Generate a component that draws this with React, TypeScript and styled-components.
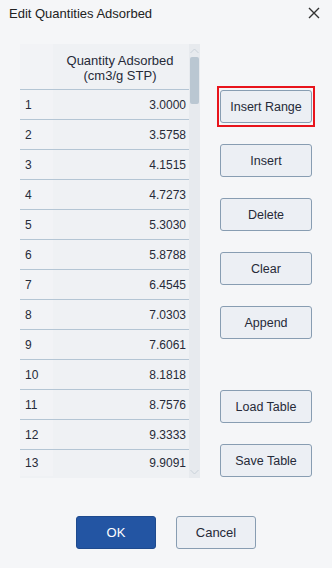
import React from 'react';
import styled, {createGlobalStyle} from 'styled-components';

const values = [
  '3.0000', '3.5758', '4.1515', '4.7273', '5.3030', '5.8788', '6.4545',
  '7.0303', '7.6061', '8.1818', '8.7576', '9.3333', '9.9091',
];

const sideButtons = [
  {label: 'Insert Range', focused: true},
  {label: 'Insert'},
  {label: 'Delete'},
  {label: 'Clear'},
  {label: 'Append', gapAfter: true},
  {label: 'Load Table'},
  {label: 'Save Table'},
];

export default function App() {
  return (
    <>
      <GlobalStyle />
      <Dialog>
        <TitleBar>
          <Title>Edit Quantities Adsorbed</Title>
          <CloseButton aria-label="Close">
            <svg width="12" height="12" viewBox="0 0 12 12">
              <path d="M1 1 L11 11 M11 1 L1 11" stroke="#333" strokeWidth="1.4" />
            </svg>
          </CloseButton>
        </TitleBar>
        <Body>
          <TablePanel>
            <TableArea>
              <HeaderRow>
                <IndexCell />
                <HeaderCell>
                  Quantity Adsorbed
                  <br />
                  (cm3/g STP)
                </HeaderCell>
              </HeaderRow>
              {values.map((v, i) => (
                <Row key={v}>
                  <IndexCell>{i + 1}</IndexCell>
                  <ValueCell>{v}</ValueCell>
                </Row>
              ))}
            </TableArea>
            <ScrollTrack>
              <Arrow>
                <svg width="9" height="6" viewBox="0 0 9 6">
                  <path d="M0.5 5 L4.5 1 L8.5 5" stroke="#c9d1d9" fill="none" />
                </svg>
              </Arrow>
              <Thumb />
              <Spacer />
              <Arrow>
                <svg width="9" height="6" viewBox="0 0 9 6">
                  <path d="M0.5 1 L4.5 5 L8.5 1" stroke="#c9d1d9" fill="none" />
                </svg>
              </Arrow>
            </ScrollTrack>
          </TablePanel>
          <SideColumn>
            {sideButtons.map(b => (
              <SideButton key={b.label} $focused={b.focused} $gapAfter={b.gapAfter}>
                {b.label}
              </SideButton>
            ))}
          </SideColumn>
        </Body>
        <Footer>
          <FooterButton $primary>OK</FooterButton>
          <FooterButton>Cancel</FooterButton>
        </Footer>
      </Dialog>
    </>
  );
}

const GlobalStyle = createGlobalStyle`
  body {
    margin: 0;
    background: #f5f6f8;
    font-family: "Liberation Sans", Arial, sans-serif;
    color: #262a38;
  }
`;

const Dialog = styled.div`
  display: flex;
  flex-direction: column;
  width: 332px;
  height: 568px;
  background: #f5f6f8;
  overflow: hidden;
`;

const TitleBar = styled.div`
  display: flex;
  align-items: center;
  justify-content: space-between;
  height: 26px;
  padding: 0 6px 0 9px;
`;

const Title = styled.div`
  font-size: 13px;
  color: #222;
`;

const CloseButton = styled.div`
  display: flex;
  align-items: center;
  justify-content: center;
  width: 14px;
  height: 14px;
  margin-right: 5px;
`;

const Body = styled.div`
  display: flex;
  padding: 18px 0 0 20px;
`;

const TablePanel = styled.div`
  display: flex;
  width: 180px;
  height: 434px;
  background: #eff1f4;
  overflow: hidden;
`;

const TableArea = styled.div`
  display: flex;
  flex-direction: column;
  width: 169px;
`;

const HeaderRow = styled.div`
  display: flex;
  flex-shrink: 0;
  height: 45px;
  border-bottom: 1px solid #b4c5d4;
`;

const Row = styled.div`
  display: flex;
  flex-shrink: 0;
  height: 29px;
  border-bottom: 1px solid #b4c5d4;
  font-size: 12px;

  &:last-child {
    height: 26px;
    padding-bottom: 3px;
  }
`;

const IndexCell = styled.div`
  display: flex;
  align-items: center;
  width: 33px;
  padding-left: 5px;
  box-sizing: border-box;
  background: #f2f3f6;
`;

const HeaderCell = styled.div`
  flex: 1;
  display: flex;
  align-items: center;
  justify-content: center;
  text-align: center;
  font-size: 13px;
  line-height: 15px;
  padding: 2px 2px 0 0;
`;

const ValueCell = styled.div`
  flex: 1;
  display: flex;
  align-items: center;
  justify-content: flex-end;
  padding-right: 3px;
`;

const ScrollTrack = styled.div`
  display: flex;
  flex-direction: column;
  align-items: center;
  width: 11px;
  background: #e7eaee;
`;

const Arrow = styled.div`
  display: flex;
  align-items: center;
  justify-content: center;
  height: 13px;
`;

const Thumb = styled.div`
  width: 9px;
  height: 47px;
  border-radius: 2px;
  background: #bac7d2;
`;

const Spacer = styled.div`
  flex: 1;
`;

const SideColumn = styled.div`
  display: flex;
  flex-direction: column;
  gap: 21px;
  padding: 46px 0 0 20px;
`;

const SideButton = styled.div<{$focused?: boolean; $gapAfter?: boolean}>`
  position: relative;
  display: flex;
  align-items: center;
  justify-content: center;
  width: 92px;
  height: 33px;
  box-sizing: border-box;
  border: 1px solid #889db2;
  border-radius: 3px;
  background: #eceff4;
  font-size: 12.5px;
  color: #262a38;
  margin-bottom: ${p => (p.$gapAfter ? '30px' : '0')};

  &::after {
    content: '';
    display: ${p => (p.$focused ? 'block' : 'none')};
    position: absolute;
    inset: -5px -4px -5px -4px;
    border: 2px solid #e8141c;
  }
`;

const Footer = styled.div`
  display: flex;
  justify-content: center;
  gap: 20px;
  margin-top: 38px;
`;

const FooterButton = styled.div<{$primary?: boolean}>`
  display: flex;
  align-items: center;
  justify-content: center;
  width: 80px;
  height: 33px;
  box-sizing: border-box;
  border: 1px solid ${p => (p.$primary ? '#1e4a8e' : '#889db2')};
  border-radius: 3px;
  background: ${p => (p.$primary ? '#2355a3' : '#eceff4')};
  color: ${p => (p.$primary ? '#fff' : '#262a38')};
  font-size: 13px;
`;
